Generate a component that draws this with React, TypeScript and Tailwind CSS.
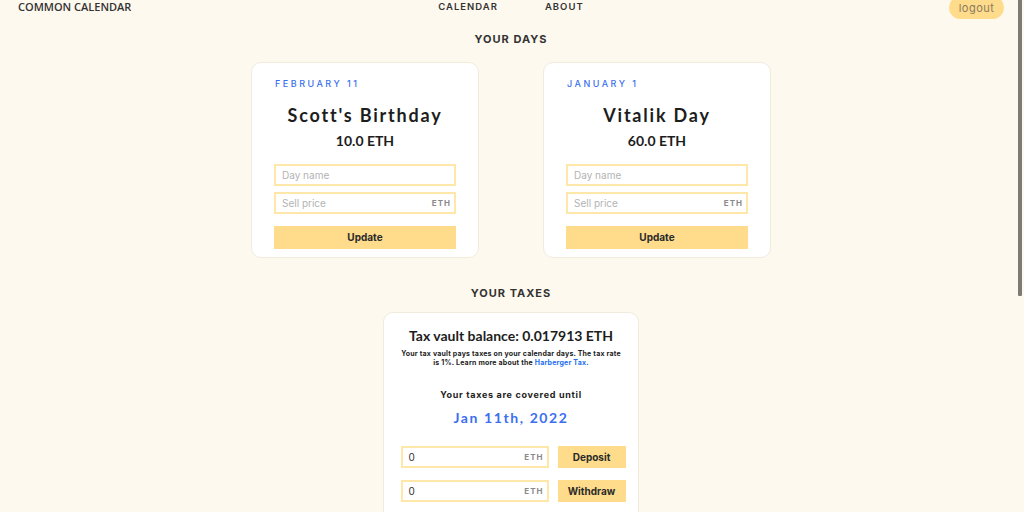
import React from "react";

const DayCard = ({ date, title, price }: { date: string; title: string; price: string }) => (
  <div className="w-[228px] h-[196px] bg-white rounded-[10px] border border-[#f1ebdd] px-[22px] pt-[15px] flex flex-col font-['Inter',sans-serif]">
    <div className="text-[9px] tracking-[2.5px] text-[#3b6ff0] font-medium leading-[12px] ml-[1px]">{date}</div>
    <div className="mt-[13px] text-center text-[18px] font-bold tracking-[1.8px] text-[#1d1d1d] leading-[24px] font-['Lato',sans-serif]">{title}</div>
    <div className="mt-[4px] text-center text-[14px] font-bold text-[#1d1d1d] leading-[20px] font-['Lato',sans-serif]">{price}</div>
    <div className="mt-[13px] h-[22px] border-2 border-[#fee7a9] flex items-center px-[6px] text-[10px] text-[#b3b3b3]">Day name</div>
    <div className="mt-[6px] h-[22px] border-2 border-[#fee7a9] flex items-center justify-between px-[6px] text-[10px] text-[#b3b3b3]">
      <span>Sell price</span>
      <span className="text-[8px] font-bold tracking-[1px] text-[#8a8a8a] -mr-[3px]">ETH</span>
    </div>
    <div className="mt-[12px] h-[23px] bg-[#fedc8c] flex items-center justify-center text-[10px] font-bold text-[#2a2a2a]">Update</div>
  </div>
);

const TaxRow = ({ label }: { label: string }) => (
  <div className="flex gap-[9px] font-['Inter',sans-serif]">
    <div className="w-[148px] h-[22px] border-2 border-[#fee7a9] flex items-center justify-between px-[6px] text-[10px] text-[#333]">
      <span>0</span>
      <span className="text-[8px] font-bold tracking-[1px] text-[#8a8a8a] -mr-[3px]">ETH</span>
    </div>
    <div className="w-[68px] h-[22px] bg-[#fedc8c] flex items-center justify-center text-[10px] font-bold text-[#2a2a2a]">{label}</div>
  </div>
);

export default function App() {
  return (
    <div className="relative w-[1024px] h-[512px] overflow-hidden bg-[#fef9ee]">
      <div className="absolute right-[2px] top-0 w-[4px] h-[296px] bg-[#7d7b76] rounded-b-[1px]" />
      <div className="grid grid-cols-[1fr_auto_1fr] items-start pl-[18px] pr-[20px] h-[20px]">
        <div className="pt-[1px] text-[11px] font-semibold text-[#333] leading-[12px] font-['Open_Sans',sans-serif]">COMMON CALENDAR</div>
        <div className="pt-[1px] flex gap-[47px] text-[9.5px] font-semibold tracking-[1px] text-[#333] leading-[12px] font-['Inter',sans-serif]">
          <span>CALENDAR</span>
          <span>ABOUT</span>
        </div>
        <div className="flex justify-end">
          <div className="w-[55px] h-[23px] -mt-[4px] rounded-full bg-[#fedc8c] flex items-center justify-center text-[11px] text-[#8b7a5c] tracking-[0.5px] pt-[2px] font-['Inter',sans-serif]">logout</div>
        </div>
      </div>
      <div className="mt-[12px] text-center text-[11px] font-bold tracking-[1px] text-[#333] leading-[14px] pr-[2px] font-['Inter',sans-serif]">YOUR DAYS</div>
      <div className="mt-[16px] flex justify-center gap-[64px] pr-[2px]">
        <DayCard date="FEBRUARY 11" title="Scott's Birthday" price="10.0 ETH" />
        <DayCard date="JANUARY 1" title="Vitalik Day" price="60.0 ETH" />
      </div>
      <div className="mt-[28px] text-center text-[11px] font-bold tracking-[1px] text-[#333] leading-[14px] pr-[2px] font-['Inter',sans-serif]">YOUR TAXES</div>
      <div className="mt-[12px] flex justify-center pr-[2px]">
        <div className="w-[256px] h-[220px] bg-white rounded-[10px] border border-[#f1ebdd] flex flex-col items-center pt-[13px] font-['Inter',sans-serif]">
          <div className="text-[14px] font-bold text-[#1d1d1d] leading-[20px] font-['Lato',sans-serif]">Tax vault balance: 0.017913 ETH</div>
          <div className="mt-[3px] flex flex-col items-center text-[7px] font-bold text-[#222] leading-[9px] tracking-[0.2px]">
            <div>Your tax vault pays taxes on your calendar days. The tax rate</div>
            <div>is 1%. Learn more about the <span className="text-[#1f6ff0]">Harberger Tax.</span></div>
          </div>
          <div className="mt-[22px] text-[9px] font-bold tracking-[0.7px] text-[#222] leading-[12px]">Your taxes are covered until</div>
          <div className="mt-[7px] text-[14px] font-bold tracking-[1.6px] text-[#3b6ff0] leading-[20px] font-['Lato',sans-serif]">Jan 11th, 2022</div>
          <div className="mt-[18px] flex flex-col gap-[12px] ml-[4px]">
            <TaxRow label="Deposit" />
            <TaxRow label="Withdraw" />
          </div>
        </div>
      </div>
    </div>
  );
}
